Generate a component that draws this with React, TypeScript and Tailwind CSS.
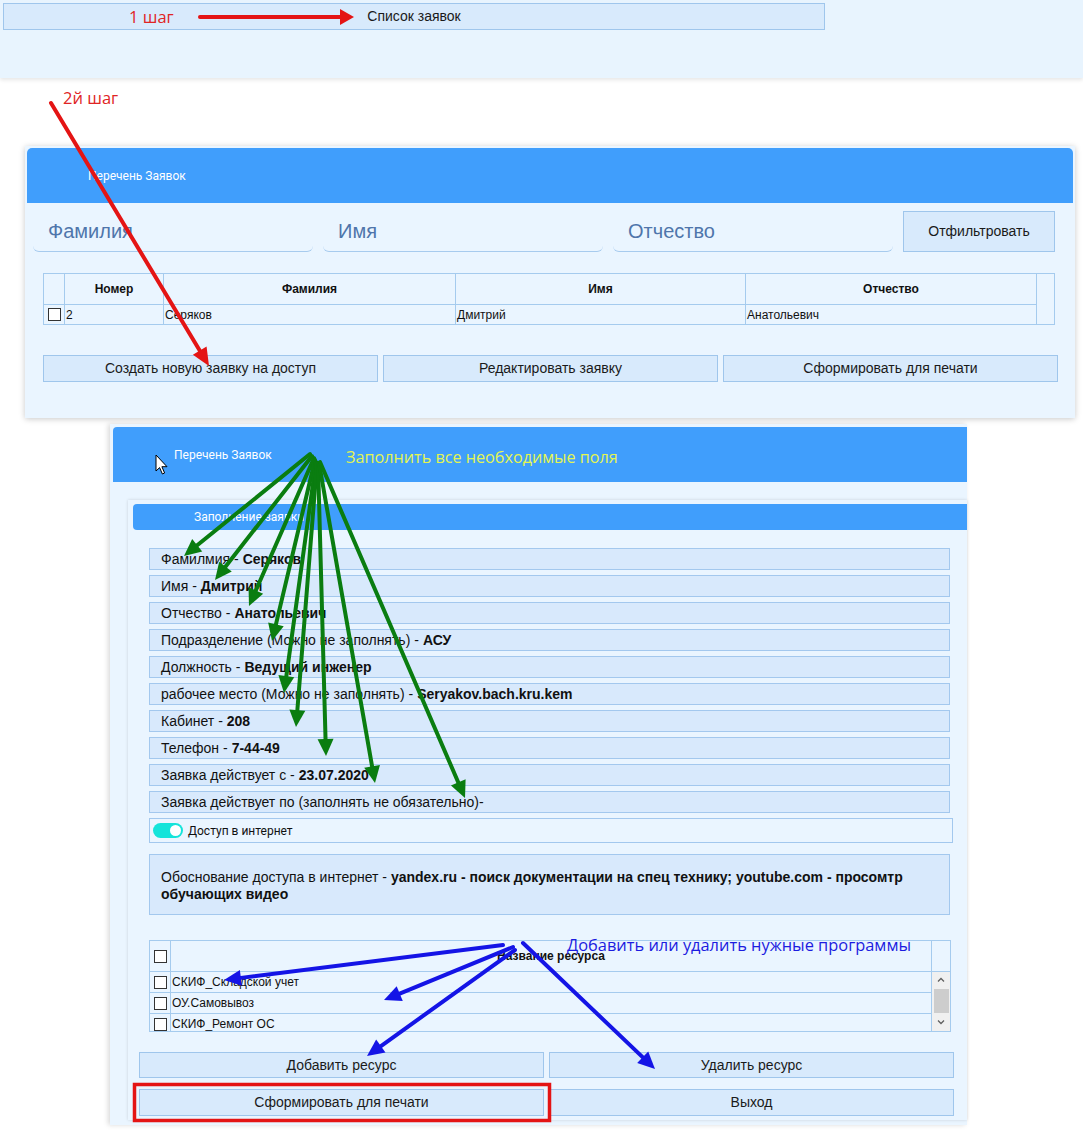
import React from "react";

type Pt = [number, number];

function Arrow({
  from,
  to,
  color,
  w = 4,
  head = 17,
  hw = 8,
}: {
  from: Pt;
  to: Pt;
  color: string;
  w?: number;
  head?: number;
  hw?: number;
}) {
  const dx = to[0] - from[0];
  const dy = to[1] - from[1];
  const len = Math.hypot(dx, dy);
  const ux = dx / len;
  const uy = dy / len;
  const bx = to[0] - ux * head;
  const by = to[1] - uy * head;
  const px = -uy * hw;
  const py = ux * hw;
  return (
    <g>
      <line
        x1={from[0]}
        y1={from[1]}
        x2={bx + ux * 2}
        y2={by + uy * 2}
        stroke={color}
        strokeWidth={w}
        strokeLinecap="round"
      />
      <polygon
        points={`${to[0]},${to[1]} ${bx + px},${by + py} ${bx - px},${by - py}`}
        fill={color}
      />
    </g>
  );
}

function Box() {
  return <span className="inline-block h-[13px] w-[13px] shrink-0 border border-[#333] bg-white" />;
}

function Btn({ children, className = "" }: { children: React.ReactNode; className?: string }) {
  return (
    <button
      className={`flex items-center justify-center border border-[#9fc6ec] bg-[#d8eafc] text-[14px] text-[#1a1a1a] ${className}`}
    >
      {children}
    </button>
  );
}

function FieldRow({ label, value }: { label: string; value?: string }) {
  return (
    <div className="flex h-[22px] w-[801px] items-center border border-[#a3c8ee] bg-[#d8e9fc] pl-[11px] text-[14px] text-[#111]">
      <span>{label}</span>
      {value && <b className="ml-[4px] font-bold">{value}</b>}
    </div>
  );
}

const fields: { label: string; value?: string }[] = [
  { label: "Фамилмия -", value: "Серяков" },
  { label: "Имя -", value: "Дмитрий" },
  { label: "Отчество -", value: "Анатольевич" },
  { label: "Подразделение (Можно не заполнять) -", value: "АСУ" },
  { label: "Должность -", value: "Ведущий инженер" },
  { label: "рабочее место (Можно не заполнять) -", value: "Seryakov.bach.kru.kem" },
  { label: "Кабинет -", value: "208" },
  { label: "Телефон -", value: "7-44-49" },
  { label: "Заявка действует с -", value: "23.07.2020" },
  { label: "Заявка действует по (заполнять не обязательно)-" },
];

const resources = ["СКИФ_Складской учет", "ОУ.Самовывоз", "СКИФ_Ремонт ОС"];

const green: [Pt, Pt][] = [
  [[310, 454], [184, 556]],
  [[312, 456], [215, 580]],
  [[314, 458], [249, 606]],
  [[315, 460], [272, 641]],
  [[316, 462], [284, 693]],
  [[317, 463], [296, 727]],
  [[318, 463], [326, 756]],
  [[319, 463], [375, 783]],
  [[320, 462], [465, 798]],
];

const blue: [Pt, Pt][] = [
  [[503, 945], [224, 980]],
  [[513, 947], [384, 1000]],
  [[515, 950], [367, 1056]],
  [[523, 943], [655, 1069]],
];

export default function App() {
  return (
    <div className="relative h-[1133px] w-[1083px] overflow-hidden bg-white font-['Liberation_Sans',Arial,sans-serif]">
      {/* top bar */}
      <div className="h-[78px] bg-[#e8f4fe] pl-[3px] pt-[3px] shadow-[0_2px_4px_rgba(0,0,0,0.1)]">
        <Btn className="h-[27px] w-[822px]">Список заявок</Btn>
      </div>

      {/* list panel */}
      <div className="ml-[25px] mt-[68px] h-[272px] w-[1050px] bg-[#eaf5ff] p-[2px] shadow-[0_1px_6px_rgba(0,0,0,0.22)]">
        <div className="flex h-[55px] items-center rounded-t-[5px] bg-[#409efc] pl-[61px] font-['Roboto',sans-serif] text-[12px] text-white">
          Перечень Заявок
        </div>
        <div className="ml-[6px] mt-[8px] flex gap-[10px]">
          {["Фамилия", "Имя", "Отчество"].map((p) => (
            <input
              key={p}
              placeholder={p}
              className="h-[41px] w-[280px] rounded-b-[6px] border-b border-[#a7cbee] bg-transparent pl-[15px] pt-[1px] text-[20px] outline-none placeholder:text-[#4f75ab]"
            />
          ))}
          <Btn className="h-[41px] w-[152px]">Отфильтровать</Btn>
        </div>

        <div className="ml-[16px] mt-[21px] flex h-[52px] w-[1012px] border border-[#a5cbee] text-[12px] text-[#111]">
          <div className="flex w-[993px] flex-col border-r border-[#a5cbee]">
            <div className="flex h-[31px] border-b border-[#a5cbee] font-bold">
              <div className="w-[21px] border-r border-[#a5cbee]" />
              <div className="flex w-[99px] items-center justify-center border-r border-[#a5cbee]">Номер</div>
              <div className="flex w-[292px] items-center justify-center border-r border-[#a5cbee]">Фамилия</div>
              <div className="flex w-[290px] items-center justify-center border-r border-[#a5cbee]">Имя</div>
              <div className="flex flex-1 items-center justify-center">Отчество</div>
            </div>
            <div className="flex flex-1">
              <div className="flex w-[21px] items-center justify-center border-r border-[#a5cbee]">
                <Box />
              </div>
              <div className="flex w-[99px] items-center border-r border-[#a5cbee] pl-[1px]">2</div>
              <div className="flex w-[292px] items-center border-r border-[#a5cbee] pl-[1px]">Серяков</div>
              <div className="flex w-[290px] items-center border-r border-[#a5cbee] pl-[1px]">Дмитрий</div>
              <div className="flex flex-1 items-center pl-[1px]">Анатольевич</div>
            </div>
          </div>
        </div>

        <div className="ml-[16px] mt-[30px] flex gap-[5px]">
          <Btn className="h-[27px] w-[335px]">Создать новую заявку на доступ</Btn>
          <Btn className="h-[27px] w-[335px]">Редактировать заявку</Btn>
          <Btn className="h-[27px] w-[335px]">Сформировать для печати</Btn>
        </div>
      </div>

      {/* request panel */}
      <div className="ml-[110px] mt-[6px] h-[701px] w-[857px] bg-[#eaf5ff] pl-[3px] pt-[3px] shadow-[-2px_0_5px_rgba(0,0,0,0.15)]">
        <div className="flex h-[55px] items-center rounded-tl-[4px] bg-[#409efc] pl-[61px] font-['Roboto',sans-serif] text-[12px] text-white">
          Перечень Заявок
        </div>

        <div className="ml-[15px] mt-[18px] h-[620px] bg-[#eaf5ff] pl-[5px] pt-[4px] shadow-[0_0_3px_rgba(0,0,0,0.15)]">
          <div className="flex h-[26px] items-center rounded-l-[4px] bg-[#409efc] pl-[61px] font-['Roboto',sans-serif] text-[12px] text-white">
            Заполнение заявки
          </div>

          <div className="ml-[6px] mt-[18px] flex flex-col">
            <div className="ml-[10px] flex flex-col gap-[5px]">
              {fields.map((f) => (
                <FieldRow key={f.label} label={f.label} value={f.value} />
              ))}
              <div className="flex h-[25px] w-[804px] items-center gap-[5px] border border-[#a3c8ee] bg-[#eaf5ff] pl-[3px]">
                <span className="relative h-[15px] w-[30px] rounded-full bg-[#14e4da]">
                  <span className="absolute right-[2px] top-[2px] h-[11px] w-[11px] rounded-full bg-white" />
                </span>
                <span className="font-['Roboto',sans-serif] text-[12px] text-[#111]">Доступ в интернет</span>
              </div>
            </div>

            <div className="ml-[10px] mt-[11px] h-[61px] w-[801px] border border-[#a3c8ee] bg-[#d8e9fc] pl-[11px] pt-[14px] text-[14px] leading-[17px] text-[#111]">
              Обоснование доступа в интернет -{" "}
              <b>
                yandex.ru - поиск документации на спец технику; youtube.com - просомтр
                <br />
                обучающих видео
              </b>
            </div>

            <div className="ml-[10px] mt-[25px] flex h-[92px] w-[802px] flex-col border border-[#a5cbee] text-[12px] text-[#111]">
              <div className="flex h-[31px] shrink-0 border-b border-[#a5cbee]">
                <div className="flex w-[21px] items-center justify-center border-r border-[#a5cbee]">
                  <Box />
                </div>
                <div className="flex flex-1 items-center justify-center border-r border-[#a5cbee] font-bold">
                  Название ресурса
                </div>
                <div className="w-[18px]" />
              </div>
              <div className="flex flex-1 overflow-hidden">
                <div className="flex flex-1 flex-col border-r border-[#a5cbee]">
                  {resources.map((r) => (
                    <div key={r} className="flex h-[21px] shrink-0 border-b border-[#a5cbee]">
                      <div className="flex w-[21px] items-center justify-center border-r border-[#a5cbee]">
                        <Box />
                      </div>
                      <div className="flex items-center pl-[1px]">{r}</div>
                    </div>
                  ))}
                </div>
                <div className="flex w-[18px] flex-col items-center bg-[#f0f0f0] pt-[2px]">
                  <svg width="10" height="10" viewBox="0 0 10 10" className="mt-[1px]">
                    <path d="M2 6.5 L5 3.5 L8 6.5" stroke="#606060" strokeWidth="1.3" fill="none" />
                  </svg>
                  <div className="mt-[4px] h-[24px] w-[15px] bg-[#cdcdcd]" />
                  <svg width="10" height="10" viewBox="0 0 10 10" className="mt-[4px]">
                    <path d="M2 3.5 L5 6.5 L8 3.5" stroke="#606060" strokeWidth="1.3" fill="none" />
                  </svg>
                </div>
              </div>
            </div>

            <div className="mt-[20px] flex gap-[5px]">
              <Btn className="h-[26px] w-[405px]">Добавить ресурс</Btn>
              <Btn className="h-[26px] w-[405px]">Удалить ресурс</Btn>
            </div>
            <div className="mt-[11px] flex gap-[5px]">
              <Btn className="h-[27px] w-[405px]">Сформировать для печати</Btn>
              <Btn className="h-[27px] w-[405px]">Выход</Btn>
            </div>
          </div>
        </div>
      </div>

      {/* annotations */}
      <span className="absolute left-[129px] top-[6px] font-['Open_Sans',sans-serif] text-[16.5px] leading-[22px] text-[#e02424]">
        1 шаг
      </span>
      <span className="absolute left-[63px] top-[87px] font-['Open_Sans',sans-serif] text-[16.5px] leading-[22px] text-[#e02424]">
        2й шаг
      </span>
      <span className="absolute left-[346px] top-[446px] font-['Open_Sans',sans-serif] text-[16.2px] leading-[22px] text-[#e4f550]">
        Заполнить все необходимые поля
      </span>
      <span className="absolute left-[567px] top-[934px] font-['Open_Sans',sans-serif] text-[16.4px] leading-[22px] text-[#1c1ce0]">
        Добавить или удалить нужные программы
      </span>

      <svg className="pointer-events-none absolute left-0 top-0" width="1083" height="1133" viewBox="0 0 1083 1133">
        <Arrow from={[200, 17]} to={[354, 17]} color="#e41414" w={4} head={14} hw={8} />
        <Arrow from={[51, 103]} to={[209, 366]} color="#e41414" w={4} head={18} hw={8} />
        {green.map(([a, b], i) => (
          <Arrow key={`g${i}`} from={a} to={b} color="#0a7d10" w={4} head={17} hw={8} />
        ))}
        {blue.map(([a, b], i) => (
          <Arrow key={`b${i}`} from={a} to={b} color="#1414e6" w={4} head={17} hw={8} />
        ))}
        <rect x="134.5" y="1084.5" width="415" height="36" fill="none" stroke="#e41414" strokeWidth="3.5" />
        <path
          d="M156 455 L156 471 L159.6 467.6 L162.4 474 L164.6 473 L161.9 466.7 L167 466.7 Z"
          fill="#fff"
          stroke="#000"
          strokeWidth="1"
          strokeLinejoin="round"
        />
      </svg>
    </div>
  );
}
